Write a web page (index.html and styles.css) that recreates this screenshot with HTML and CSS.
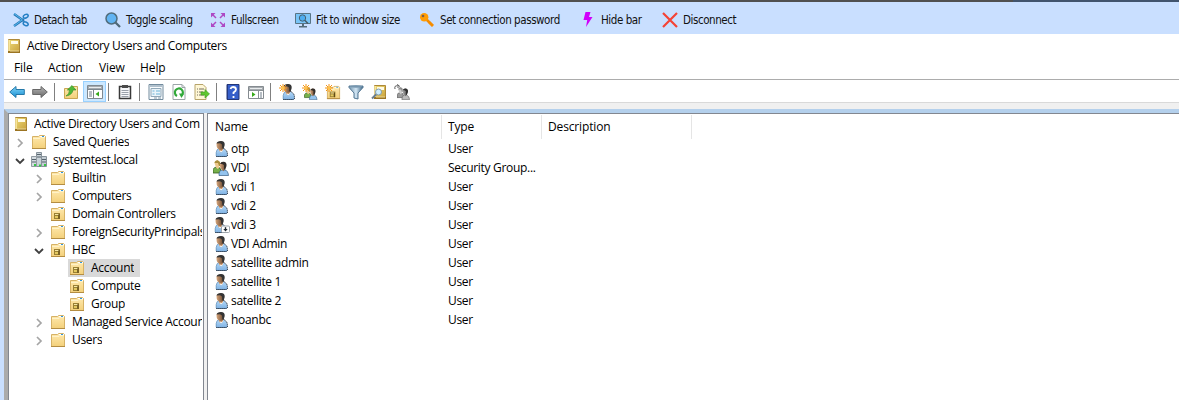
FILE: index.html
```html
<!DOCTYPE html>
<html lang="en">
<head>
<meta charset="utf-8">
<title>Active Directory Users and Computers</title>
<link rel="stylesheet" href="styles.css">
</head>
<body>
<svg class="defs" width="0" height="0" aria-hidden="true">
  <defs>
    <linearGradient id="gold" x1="0" y1="0" x2="0" y2="1"><stop offset="0" stop-color="#ffe9ae"/><stop offset="1" stop-color="#f3d07a"/></linearGradient>
    <linearGradient id="book" x1="0" y1="0" x2="1" y2="1"><stop offset="0" stop-color="#eedb78"/><stop offset="1" stop-color="#c8a03a"/></linearGradient>
    <linearGradient id="cloth" x1="0" y1="0" x2="0" y2="1"><stop offset="0" stop-color="#b4dafa"/><stop offset="1" stop-color="#7db0e2"/></linearGradient>
    <linearGradient id="skin" x1="0" y1="0" x2="1" y2="0"><stop offset="0" stop-color="#d7a57a"/><stop offset="1" stop-color="#60412b"/></linearGradient>
    <linearGradient id="blueArrow" x1="0" y1="0" x2="0" y2="1"><stop offset="0" stop-color="#83d6fa"/><stop offset="1" stop-color="#168dd0"/></linearGradient>
    <linearGradient id="grayArrow" x1="0" y1="0" x2="0" y2="1"><stop offset="0" stop-color="#b5b5b5"/><stop offset="1" stop-color="#686868"/></linearGradient>
    <linearGradient id="steel" x1="0" y1="0" x2="1" y2="0"><stop offset="0" stop-color="#7294ae"/><stop offset=".5" stop-color="#d3e7f5"/><stop offset="1" stop-color="#3c6585"/></linearGradient>
  </defs>
  <symbol id="book-icon" viewBox="0 0 16 16">
    <path d="M2.500 1.500h11v13h-11z" fill="url(#book)" stroke="#ae8938"/><path d="M3 2v12" stroke="#fff0ae" stroke-width="1.400"/><path d="M5 3h7v3H5z" fill="#fffbe6"/><path d="M2 13h12v2H2z" fill="#9b7422"/><path d="M4 13h9" stroke="#ebd798"/>
  </symbol>
  <symbol id="folder" viewBox="0 0 16 16">
    <path d="M1.500 2.500h6l1-1h5l1 1v12h-13z" fill="url(#gold)" stroke="#d6b266"/><path d="M9 2h5v1H9z" fill="#fff"/><path d="M11 2h2v1h-2z" fill="#3095df"/><path d="M2 4.500h7l1-1h4" fill="none" stroke="#fff2c8"/><path d="M1 14.500h14" stroke="#b48d42"/>
  </symbol>
  <symbol id="ou" viewBox="0 0 16 16">
    <use href="#folder"/><path d="M4 7h6v6H4z" fill="#9a8034"/><path d="M5 8h4v1H5z" fill="#f7e9a5"/><path d="M5 10h3v2H5z" fill="#e3c860"/><path d="M9 8v5" stroke="#5b4514"/>
  </symbol>
  <symbol id="servers" viewBox="0 0 16 16">
    <path d="M5.500 .5h5v14h-5z" fill="#c9d2d8" stroke="#87929a"/><path d="M.5 4.500h5v10h-5z" fill="#d4dbe0" stroke="#929ba2"/><path d="M10.500 4.500h5v10h-5z" fill="#c3ccd3" stroke="#87929a"/><path d="M6 2.500h4M6 5h4M1 7.500h4M1 10h4M11 7.500h4M11 10h4" stroke="#56636d"/><path d="M3 12h2v2H3zM8 12.500h2v2H8zM13 12h2v2h-2z" fill="#35c944"/>
  </symbol>
  <symbol id="user" viewBox="0 0 16 16">
    <path d="M2 15V11.500Q2.500 8 5.500 7.500h4q3.200 1.500 3.700 4.500V15l-1 .8H3z" fill="url(#cloth)"/><path d="M2.200 15.500h10.600M9.500 7.500q3.500 1.500 3.900 5v2.500" fill="none" stroke="#24364a" stroke-dasharray="1.500 .5"/><path d="M2.200 15V11.500Q2.700 8 5 7.500" fill="none" stroke="#6b96bd" stroke-width=".8"/><path d="M5 6.500l4-.5v3.500L7 11.500 5 9.500z" fill="#c9966b"/><path d="M6 9.500l1 1.500 1.800-1.500" fill="none" stroke="#f4faff"/><path d="M2.500 3q.5-2.700 4-2.600Q10 .4 10 4L9.300 7.500 7 9Q3.300 8.500 2.700 5.500z" fill="url(#skin)"/><path d="M2.500 2.500Q3 0 7 0q4 .2 3.700 4L9.500 8 8.300 7 8 3.500 6 2.300z" fill="#343434"/>
  </symbol>
  <symbol id="group" viewBox="0 0 16 16">
    <path d="M0 13V9.500q1-2.500 4-2.500 4 .2 4 4v2z" fill="#76b04b" stroke="#335c20" stroke-width=".8"/><path d="M1.500 3Q1.700.3 4.500.4 7.200 1 6.700 4.200L6 8 4.500 9 3 7.500z" fill="#edc98e"/><path d="M1.500 3Q2 0 4.800.2L7 2v4H6L5 3H2z" fill="#a98e3d"/><path d="M6 15.500q-.2-5 3-5.500h3q3 .7 3.500 5.500z" fill="#93c3ee" stroke="#375d83" stroke-width=".7"/><path d="M7 5q.2-3 3-3.100Q13 2 13 5l-1 4-1.500 2.300Q7 9 7 6z" fill="url(#skin)"/><path d="M7 4q1-2.500 3.500-2.200Q14 2 13.500 6l-1.500 4-1-1V5L9 4z" fill="#332d2a"/>
  </symbol>
  <symbol id="user-disabled" viewBox="0 0 16 16"><use href="#user" x="-1"/><rect x="7.500" y="9" width="8" height="6.500" rx="1" fill="#fff" stroke="#9da5ab"/><path d="M11.500 10.200v2.500" stroke="#1b252c" stroke-width="1.400"/><path d="M9.300 12h4.400l-2.200 2.500z" fill="#1b252c"/></symbol>
  <symbol id="spark" viewBox="0 0 8 8"><path d="M4 0v8M0 4h8M1 1l6 6M7 1L1 7" stroke="#f29418" stroke-width="1"/><circle cx="4" cy="4" r="1.700" fill="#ffc24a"/></symbol>
  <symbol id="right" viewBox="0 0 8 10"><path d="M2 1l4 4-4 4" fill="none" stroke="#a5a5a5" stroke-width="1.700"/></symbol>
  <symbol id="down" viewBox="0 0 10 8"><path d="M1 2l4 4 4-4" fill="none" stroke="#404040" stroke-width="1.800"/></symbol>
</svg>

<div class="screen">
  <div class="tab-edge"></div>
  <nav class="connection-bar">
    <button><svg viewBox="0 0 16 16"><path d="M1 2l10 7M1 14l10-7" stroke="#2a78b5" stroke-width="2.500"/><path d="M1 1.500l8.500 6.500M1 14l8-6" stroke="#55b9ed"/><ellipse cx="12.700" cy="4.200" rx="2.600" ry="1.700" transform="rotate(-25 12.700 4.200)" fill="none" stroke="#237fc4" stroke-width="1.500"/><ellipse cx="12.700" cy="11.800" rx="2.600" ry="1.700" transform="rotate(25 12.700 11.800)" fill="none" stroke="#237fc4" stroke-width="1.500"/></svg><span>Detach tab</span></button>
    <button><svg viewBox="0 0 16 16"><path d="M10.500 10.500l4.500 4.500" stroke="#4d6878" stroke-width="2.300"/><circle cx="6.500" cy="6.500" r="5.500" fill="#61b4f3" stroke="#506c7c" stroke-width="1.500"/></svg><span>Toggle scaling</span></button>
    <button><svg viewBox="0 0 16 16"><path d="M6 6L2 2M10 6l4-4M6 10l-4 4M10 10l4 4" stroke="#ae49c4" stroke-width="1.500"/><path d="M1 1h4.500L1 5.500zM15 1v4.500L10.500 1zM1 15v-4.500L5.500 15zM15 15h-4.500l4.500-4.500z" fill="#ae49c4"/></svg><span>Fullscreen</span></button>
    <button><svg viewBox="0 0 16 16"><path d="M.5 1.500h15v10H.5z" fill="#78c4f7" stroke="#587485"/><path d="M7 12h2v2H7zM4 14h8v1.500H4z" fill="#546d7a"/><path d="M9.500 8l3.500 3.500" stroke="#455a65" stroke-width="1.500"/><circle cx="7.500" cy="6" r="3.200" fill="#4dadf0" stroke="#49606e"/></svg><span>Fit to window size</span></button>
    <button><svg viewBox="0 0 16 16"><path d="M7 7l7 7" stroke="#f58c00" stroke-width="2.700"/><path d="M10 12l2-2M12 14l2-2" stroke="#f58c00" stroke-width="1.500"/><circle cx="5.200" cy="5.200" r="4.200" fill="#ff9c05"/><circle cx="4" cy="4" r="1.300" fill="#795e50"/></svg><span>Set connection password</span></button>
    <button><svg viewBox="0 0 16 16"><path d="M5.500 0h5L9 5h3.500L6 15l1.200-7H3.500z" fill="#d000fa"/></svg><span>Hide bar</span></button>
    <button><svg viewBox="0 0 16 16"><path d="M1 1l14 14M15 1L1 15" stroke="#f44336" stroke-width="2.200"/></svg><span>Disconnect</span></button>
  </nav>
  <main class="window">
    <header class="titlebar"><svg><use href="#book-icon"/></svg><h1>Active Directory Users and Computers</h1></header>
    <nav class="menu"><span>File</span><span>Action</span><span>View</span><span>Help</span></nav>
    <div class="tools">
      <i><svg viewBox="0 0 16 16"><path d="M.7 8L7 2.500v3h8.300v5H7v3z" fill="url(#blueArrow)" stroke="#2579a9"/></svg></i>
      <i><svg viewBox="0 0 16 16"><path d="M15.300 8L9 2.500v3H.7v5H9v3z" fill="url(#grayArrow)" stroke="#686868"/></svg></i><b></b>
      <i><svg viewBox="0 0 16 16"><path d="M1.500 4.500h7l1-2h5v12h-13z" fill="url(#gold)" stroke="#c9a653"/><path d="M3 12q3.500-2 3.500-6H4.300L9 1.500l4 4.500h-3q-.7 5-7 6z" fill="#50b838" stroke="#308b20" stroke-width=".6"/></svg></i>
      <i class="active"><svg viewBox="0 0 16 16"><path d="M.5 1.500h15v13H.5z" fill="#fff" stroke="#808991"/><path d="M1 2h14v3H1z" fill="#a5abb0"/><path d="M2 3.500h12" stroke="#e9ecee"/><path d="M1 5.500h14M6.500 6v8" stroke="#7d8790"/><path d="M2 8h3M2 10h3M2 12h3" stroke="#6e7d89"/><path d="M12 7.500v5L8.500 10z" fill="#36a91a"/></svg></i><b></b>
      <i><svg viewBox="0 0 16 16"><path d="M2.500 2.500h11v12h-11z" fill="#f7f8fa" stroke="#393939" stroke-width="1.500"/><path d="M5 1h6v3H5z" fill="#4a4a4a"/><path d="M4.500 6.500h7M4.500 8.500h7M4.500 10.500h7M4.500 12.500h7" stroke="#9ba1aa"/></svg></i><b></b>
      <i><svg viewBox="0 0 16 16"><path d="M1 .5h14v15H1z" fill="#f9fcfe" stroke="#728b9d"/><path d="M2 2h12" stroke="#99aebd" stroke-width="1.500"/><path d="M3 4.500h10v8H3z" fill="#eaf4fa" stroke="#91a8b8"/><path d="M4.500 7h2M4.500 10h2M8 7h4M8 10h4" stroke="#6db3d8" stroke-width="1.200"/><path d="M6 14h3M10 14h3" stroke="#849aaa"/></svg></i>
      <i><svg viewBox="0 0 16 16"><path d="M2 .5h9l3 3v12H2z" fill="#fff" stroke="#9ba5a7"/><path d="M11 .5v3h3" fill="none" stroke="#9ba5a7"/><path d="M6 12a4 4 0 1 1 4.500-.5" fill="none" stroke="#31a93a" stroke-width="2.200"/><path d="M8 9.500h5L10.500 14z" fill="#31a93a"/></svg></i>
      <i><svg viewBox="0 0 16 16"><path d="M1 .5h8l3 3v12H1z" fill="#fff7d6" stroke="#b7a46b"/><path d="M3 5h1M5 5h5M3 8h1M5 8h4M3 11h1M5 11h5" stroke="#726f60"/><path d="M7 8h4V5.500L15.500 10 11 14v-3H7z" fill="#60c72f" stroke="#399b1e" stroke-width=".6"/></svg></i><b></b>
      <i><svg viewBox="0 0 16 16"><path d="M2 .5h12v15H2z" fill="#365fca" stroke="#243777"/><path d="M2.500 1v14" stroke="#233983"/><path d="M5.500 5Q6 3 8 3q3 0 3 2.500Q11 7 8.500 8.500V10M8.500 12v2" fill="none" stroke="#fff" stroke-width="1.800"/></svg></i>
      <i><svg viewBox="0 0 16 16"><path d="M.5 2.500h15v12H.5z" fill="#fff" stroke="#858b90"/><path d="M1 3h14v3H1z" fill="#a7acb0"/><path d="M2 4.500h12" stroke="#e9ecee"/><path d="M1 6.500h14M10.500 7v7" stroke="#888f94"/><path d="M4 8v5l3.500-2.500z" fill="#37a91a"/><path d="M12 9h2M12 11h2M12 13h2" stroke="#6e7d89"/></svg></i><b></b>
      <i><svg viewBox="0 0 16 16"><use href="#user" x="2" width="16" height="16"/><use href="#spark" width="8" height="8"/></svg></i>
      <i><svg viewBox="0 0 16 16"><use href="#group" x="2" y="3" width="14" height="13"/><use href="#spark" width="8" height="8"/></svg></i>
      <i><svg viewBox="0 0 16 16"><use href="#ou" x="1" y="1" width="15" height="15"/><use href="#spark" width="8" height="8"/></svg></i>
      <i><svg viewBox="0 0 16 16"><path d="M1 2h14v1.500L10 9v6l-4-1V9L1 3.500z" fill="url(#steel)" stroke="#547894"/><ellipse cx="8" cy="2.500" rx="6.500" ry="1.200" fill="#7696af"/></svg></i>
      <i><svg viewBox="0 0 16 16"><use href="#book-icon" x="1"/><path d="M5.500 10L1 14.500" stroke="#687e91" stroke-width="2"/><circle cx="7.500" cy="8" r="3" fill="#cfeeff" stroke="#839cab"/></svg></i>
      <i><svg class="muted" viewBox="0 0 16 16"><use href="#group" x="3" y="3" width="13" height="13"/><path d="M1 5q-1-4 3-3M3 .5L5.500 2 3.500 4" fill="none" stroke="#545454"/></svg></i>
    </div>
    <div class="spacer"></div>
    <div class="workspace">
      <aside class="tree">
        <div class="node root"><svg><use href="#book-icon"/></svg><span>Active Directory Users and Com</span></div>
        <div class="node l1"><svg class="chevron"><use href="#right"/></svg><svg><use href="#folder"/></svg><span>Saved Queries</span></div>
        <div class="node l1"><svg class="chevron"><use href="#down"/></svg><svg><use href="#servers"/></svg><span>systemtest.local</span></div>
        <div class="node l2"><svg class="chevron"><use href="#right"/></svg><svg><use href="#folder"/></svg><span>Builtin</span></div>
        <div class="node l2"><svg class="chevron"><use href="#right"/></svg><svg><use href="#folder"/></svg><span>Computers</span></div>
        <div class="node l2"><svg class="chevron"></svg><svg><use href="#ou"/></svg><span>Domain Controllers</span></div>
        <div class="node l2"><svg class="chevron"><use href="#right"/></svg><svg><use href="#folder"/></svg><span>ForeignSecurityPrincipals</span></div>
        <div class="node l2"><svg class="chevron"><use href="#down"/></svg><svg><use href="#ou"/></svg><span>HBC</span></div>
        <div class="node l3 selected"><svg><use href="#ou"/></svg><span>Account</span></div>
        <div class="node l3"><svg><use href="#ou"/></svg><span>Compute</span></div>
        <div class="node l3"><svg><use href="#ou"/></svg><span>Group</span></div>
        <div class="node l2"><svg class="chevron"><use href="#right"/></svg><svg><use href="#folder"/></svg><span>Managed Service Accoun</span></div>
        <div class="node l2"><svg class="chevron"><use href="#right"/></svg><svg><use href="#folder"/></svg><span>Users</span></div>
      </aside>
      <section class="list">
        <div class="row head"><span>Name</span><span>Type</span><span>Description</span></div>
        <div class="row"><span><svg><use href="#user"/></svg>otp</span><span>User</span></div>
        <div class="row"><span><svg class="pair"><use href="#group"/></svg>VDI</span><span>Security Group...</span></div>
        <div class="row"><span><svg><use href="#user"/></svg>vdi 1</span><span>User</span></div>
        <div class="row"><span><svg><use href="#user"/></svg>vdi 2</span><span>User</span></div>
        <div class="row"><span><svg><use href="#user-disabled"/></svg>vdi 3</span><span>User</span></div>
        <div class="row"><span><svg><use href="#user"/></svg>VDI Admin</span><span>User</span></div>
        <div class="row"><span><svg><use href="#user"/></svg>satellite admin</span><span>User</span></div>
        <div class="row"><span><svg><use href="#user"/></svg>satellite 1</span><span>User</span></div>
        <div class="row"><span><svg><use href="#user"/></svg>satellite 2</span><span>User</span></div>
        <div class="row"><span><svg><use href="#user"/></svg>hoanbc</span><span>User</span></div>
      </section>
    </div>
  </main>
</div>
</body>
</html>
```
FILE: styles.css
```css
* { box-sizing: border-box; }
body { margin: 0; overflow: hidden; font: 12px/18px "Open Sans", "Noto Sans", sans-serif; letter-spacing: -.3px; color: #000; }
svg { display: block; flex: none; width: 16px; height: 16px; }
.defs { position: absolute; width: 0; height: 0; }
.screen { height: 400px; display: flex; flex-direction: column; background: #c9dfff; }
.tab-edge { height: 2px; background: linear-gradient(90deg, #505050 0 1013px, #41546d 1013px); }
.connection-bar { height: 32px; padding: 4px 0 0 13px; display: grid; grid-template-columns: 92px 105px 85px 124px 161px 82px 100px; align-items: center; }
button { display: flex; align-items: center; gap: 5px; border: 0; padding: 0; background: none; color: #111; font: 11.5px/16px "DejaVu Sans Condensed", "DejaVu Sans", sans-serif; letter-spacing: -.43px; white-space: nowrap; }
.window { flex: 1; min-height: 0; margin-left: 4px; background: #fff; display: flex; flex-direction: column; }
.titlebar { height: 23px; padding-left: 2px; display: flex; align-items: center; gap: 5px; }
h1 { margin: 0; font-size: 12px; font-weight: 400; letter-spacing: -.36px; }
.menu { height: 22px; padding: 2px 0 0 10px; display: grid; grid-template-columns: 34px 51px 41px 40px; letter-spacing: -.1px; }
.tools { height: 24px; border-top: 1px solid #acacac; border-bottom: 1px solid #d9d9d9; padding: 1px 0 0 1px; display: flex; }
.tools i { width: 23px; height: 21px; display: flex; align-items: flex-start; justify-content: center; padding-top: 3px; }
.tools b { width: 8px; height: 18px; margin-top: 2px; background: linear-gradient(#808080, #808080) 3px 0 / 1px 100% no-repeat; }
.tools .active { margin: 0 -1px 0 1px; background: #cce8ff; border: 1px solid #99d1ff; padding-top: 2px; }
.muted { filter: grayscale(1); }
.spacer { height: 6px; background: #f0f0f0; }
.workspace { flex: 1; min-height: 0; border-top: 4px solid #b4d0ec; border-left: 4px solid #ababab; display: flex; gap: 3px; background: #f0f0f0; }
.tree { width: 196px; border: 1px solid #828790; border-bottom: 0; padding: 1px 1px 0 0; background: #fff; overflow: hidden; }
.node { height: 18px; display: flex; align-items: center; white-space: nowrap; }
.node span { overflow: hidden; flex: 0 1 auto; min-width: 0; }
.node svg { margin-right: 6px; }
.node .chevron { width: 10px; height: 10px; margin: 2px 6px 0 0; }
.root { padding-left: 4px; }
.root svg { margin-right: 5px; }
.root span { letter-spacing: -.36px; }
.l1 { padding-left: 6px; }
.l2 { padding-left: 25px; }
.l3 { padding-left: 1px; margin-left: 59px; }
.selected { width: 72px; background: #d9d9d9; }
.list { flex: 1; border: 1px solid #828790; border-width: 1px 0 0 1px; padding-top: 1px; background: #fff; }
.row { height: 19px; display: grid; grid-template-columns: 234px 100px 150px; }
.row span { padding-left: 6px; display: flex; align-items: center; white-space: nowrap; }
.row span:first-child { padding-left: 6px; gap: 1px; }
.row .pair { margin: 0 1px 0 -1px; }
.head { height: 24px; letter-spacing: -.15px; }
.head span { border-right: 1px solid #e5e5e5; }
.head span:first-child { padding-left: 7px; }
```
